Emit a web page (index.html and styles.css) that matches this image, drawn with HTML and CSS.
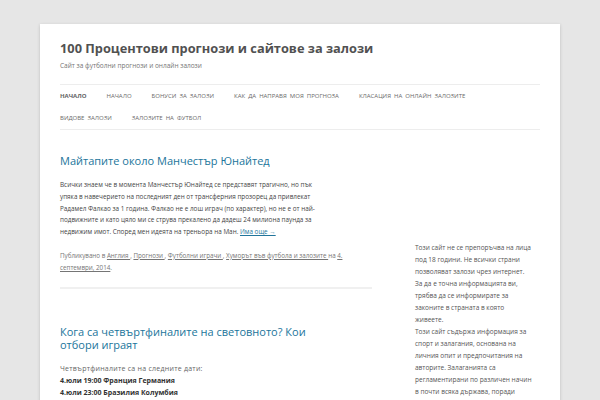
FILE: index.html
```html
<!DOCTYPE html>
<html lang="bg">
<head>
<meta charset="utf-8">
<title>100 Процентови прогнози и сайтове за залози</title>
<link rel="stylesheet" href="styles.css">
</head>
<body>
<div class="site">
  <header class="site-header">
    <h1 class="site-title"><a href="#">100 Процентови прогнози и сайтове за залози</a></h1>
    <h2 class="site-description">Сайт за футболни прогнози и онлайн залози</h2>
    <nav class="main-navigation">
      <ul class="nav-menu">
        <li class="current"><a href="#">Начало</a></li>
        <li><a href="#">Начало</a></li>
        <li><a href="#">Бонуси за залози</a></li>
        <li><a href="#">Как да направя моя прогноза</a></li>
        <li><a href="#">Класация на онлайн залозите</a></li>
        <li><a href="#">Видове залози</a></li>
        <li><a href="#">Залозите на футбол</a></li>
      </ul>
    </nav>
  </header>
  <div class="wrapper">
    <main class="site-content">
      <article class="post">
        <header class="entry-header">
          <h1 class="entry-title"><a href="#">Майтапите около Манчестър Юнайтед</a></h1>
        </header>
        <div class="entry-content">
          <p class="excerpt">Всички знаем че в момента Манчестър Юнайтед се представят трагично, но пък<br>упяка в навечерието на последният ден от трансферния прозорец да привлекат<br>Радамел Фалкао за 1 година. Фалкао не е лош играч (по характер), но не е от най-<br>подвижните и като цяло ми се струва прекалено да дадеш 24 милиона паунда за<br>недвижим имот. Според мен идеята на треньора на Ман. <a class="more-link" href="#">Има още →</a></p>
        </div>
        <footer class="entry-meta">
          Публикувано в <a href="#">Англия </a>, <a href="#">Прогнози </a>, <a href="#">Футболни играчи </a>, <a href="#">Хуморът във футбола и залозите </a> на <a href="#">4. септември, 2014</a>.
        </footer>
      </article>
      <article class="post">
        <header class="entry-header">
          <h1 class="entry-title"><a href="#">Кога са четвъртфиналите на световното? Кои<br>отбори играят</a></h1>
        </header>
        <div class="entry-content">
          <p class="lead">Четвъртфиналите са на следните дати:</p>
          <p><strong>4.юли 19:00 Франция Германия</strong></p>
          <p><strong>4.юли 23:00 Бразилия Колумбия</strong></p>
        </div>
      </article>
    </main>
    <aside class="widget-area">
      <div class="widget widget-blank"></div>
      <div class="widget textwidget">
        <p>Този сайт не се препоръчва на лица<br>под 18 години. Не всички страни<br>позволяват залози чрез интернет.<br>За да е точна информацията ви,<br>трябва да се информирате за<br>законите в страната в която<br>живеете.<br>Този сайт съдържа информация за<br>спорт и залагания, основана на<br>личния опит и предпочитания на<br>авторите. Залаганията са<br>регламентирани по различен начин<br>в почти всяка държава, поради<br>което трябва да се информирате.</p>
      </div>
    </aside>
  </div>
</div>
</body>
</html>
```
FILE: styles.css
```css
html {
  background: #e6e6e6;
}
body {
  margin: 0;
  font-family: "Open Sans", "Liberation Sans", sans-serif;
  color: #444;
  font-size: 7px;
  line-height: 1.714;
}
a {
  color: #21759b;
}
.site {
  width: 480px;
  margin: 24px auto;
  padding: 0 20px;
  background: #fff;
  box-shadow: 0 1px 3px rgba(100, 100, 100, 0.3);
  overflow: hidden;
}
.site-header {
  padding: 12px 0;
}
.site-title {
  margin: 0;
  font-size: 12.8px;
  line-height: 24px;
  font-weight: bold;
}
.site-title a {
  color: #515151;
  text-decoration: none;
}
.site-description {
  margin: 0;
  font-size: 6.5px;
  line-height: 12px;
  font-weight: normal;
  color: #757575;
}
.main-navigation {
  margin-top: 12px;
}
.nav-menu {
  list-style: none;
  margin: 0;
  padding: 0;
  border-top: 1px solid #ededed;
  border-bottom: 1px solid #ededed;
  display: flex;
  flex-wrap: wrap;
}
.nav-menu li {
  margin-right: 20px;
  font-size: 6px;
  line-height: 22px;
  word-spacing: 1.5px;
}
.nav-menu a {
  color: #6a6a6a;
  text-decoration: none;
  text-transform: uppercase;
  white-space: nowrap;
}
.nav-menu .current a {
  color: #636363;
  font-weight: bold;
}
.wrapper {
  display: flex;
  justify-content: space-between;
  align-items: flex-start;
}
.site-content {
  width: 312px;
  margin-top: 12px;
}
.widget-area {
  width: 125px;
  margin-top: 12px;
}
.post {
  border-bottom: 2px solid #f0f0f0;
  margin-bottom: 36px;
  padding-bottom: 12px;
}
.entry-header {
  margin-bottom: 12px;
}
.entry-title {
  margin: 0;
  font-size: 11px;
  line-height: 1.2;
  font-weight: normal;
}
.entry-title a {
  text-decoration: none;
  color: #21759b;
}
.entry-content p {
  margin: 0;
  line-height: 12px;
}
.entry-content .excerpt {
  font-size: 6.35px;
  line-height: 11.7px;
  white-space: nowrap;
}
.entry-content .lead {
  color: #666;
  letter-spacing: 0.25px;
}
.entry-content strong {
  color: #333;
}
.entry-meta {
  margin-top: 12px;
  font-size: 6.25px;
  line-height: 12.5px;
  color: #757575;
}
.entry-meta a {
  color: #757575;
}
.widget {
  margin-bottom: 24px;
}
.widget-blank {
  height: 64px;
}
.textwidget p {
  margin: 0;
  font-size: 6.5px;
  line-height: 12px;
  color: #555;
  white-space: nowrap;
}
```
